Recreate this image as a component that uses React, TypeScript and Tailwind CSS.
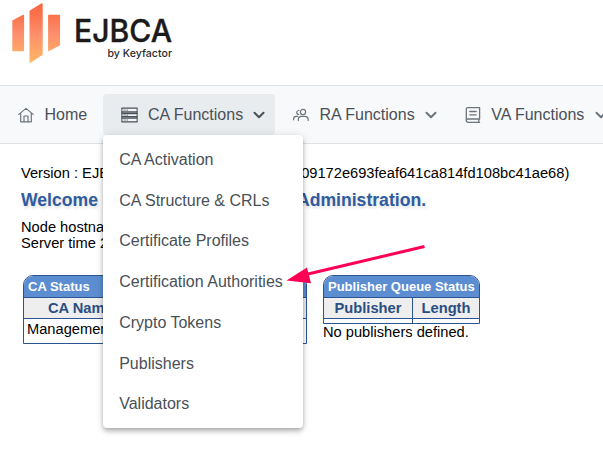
import React from "react";

const menuItems = [
  "CA Activation",
  "CA Structure & CRLs",
  "Certificate Profiles",
  "Certification Authorities",
  "Crypto Tokens",
  "Publishers",
  "Validators",
];

function Logo() {
  return (
    <div className="flex h-[85px] shrink-0">
      <svg className="ml-3 mt-[3px] h-[60px] w-[49px]" viewBox="0 0 49 60">
        <defs>
          <linearGradient id="flame" x1="0" y1="0" x2="0" y2="60" gradientUnits="userSpaceOnUse">
            <stop offset="0" stopColor="#f9663f" />
            <stop offset="0.25" stopColor="#fb7650" />
            <stop offset="0.5" stopColor="#fd8d6c" />
            <stop offset="1" stopColor="#ffb765" />
          </linearGradient>
        </defs>
        <g fill="url(#flame)" stroke="url(#flame)" strokeWidth="1.4" strokeLinejoin="round">
          <path d="M1 17.8 11.4 12.4v35.2H1Z" />
          <path d="M18.2 8.2 30 .9v50.6l-11.8 7.6Z" />
          <path d="M36.8 12.4h10.6v29.4l-10.6 5.6Z" />
        </g>
      </svg>
      <div className="ml-[14px] mt-[15px] flex w-[98px] flex-col items-end">
        <svg className="h-8 w-[98px] overflow-visible" viewBox="0 0 98 32">
          <text x="-1" y="26.5" textLength="98" lengthAdjust="spacingAndGlyphs" fill="#1b1b1b" stroke="#1b1b1b" strokeWidth=".4" className="font-['Inter',sans-serif] text-[31px] font-medium">EJBCA</text>
        </svg>
        <svg className="h-[14px] w-[65px] overflow-visible" viewBox="0 0 65 14">
          <text x="-0.5" y="10" textLength="64.5" lengthAdjust="spacingAndGlyphs" fill="#2b2b2b" className="font-['Inter',sans-serif] text-[10.6px] font-medium">by Keyfactor</text>
        </svg>
      </div>
    </div>
  );
}

function Chevron({ className }: { className: string }) {
  return (
    <svg className={`h-3 w-3 shrink-0 ${className}`} viewBox="0 0 12 12" fill="none" stroke="currentColor" strokeWidth="2" strokeLinecap="round" strokeLinejoin="round">
      <path d="m1.5 3.8 4.5 4.4 4.5-4.4" />
    </svg>
  );
}

function NavBar() {
  return (
    <nav className="flex h-[59px] shrink-0 items-start overflow-hidden border-y border-[#dee2e6] bg-[#f8f9fa] pt-2 text-[16px] leading-[41px] text-[#495057]">
      <div className="flex w-[103px] shrink-0 items-center pl-[18px]">
        <svg className="h-4 w-4" viewBox="0 0 16 16" fill="none" stroke="#6c757d" strokeWidth="1.2" strokeLinejoin="round" strokeLinecap="round">
          <path d="M.8 7.4 8 1.4l7.2 6M2.7 6.2v8.6h10.6V6.2M6 14.6V9h4v5.6" />
        </svg>
        <span className="ml-[10.5px]">Home</span>
      </div>
      <div className="flex w-[172px] shrink-0 items-center rounded-[4px] bg-[#e9ecef] pl-[18px]">
        <svg className="h-4 w-[17px]" viewBox="0 0 17 16" fill="none" stroke="#495057">
          <path fill="#f4f6f8" stroke="none" d="M1 1h15v14H1z" />
          <path strokeWidth="1" d="M.9 1v14M16.1 1v14" />
          <path strokeWidth="1.3" d="M.5 1.2h16M.5 5h16M.5 6.6h16M.5 9.6h16M.5 11.2h16M.5 14.8h16" />
          <path strokeWidth="1" d="M2.6 3.1h4.5M2.6 8.1h4.5M2.6 13h4.5" strokeDasharray="1 .8" />
        </svg>
        <span className="ml-[10px] whitespace-nowrap">CA Functions</span>
        <Chevron className="ml-[10px]" />
      </div>
      <div className="flex w-[172px] shrink-0 items-center pl-[18px]">
        <svg className="h-4 w-4" viewBox="0 0 16 16" fill="none" stroke="#6c757d" strokeWidth="1.2" strokeLinecap="round">
          <circle cx="10" cy="5" r="2.6" />
          <path d="M5.3 13.5v-1c0-2 1.5-3.1 3.2-3.1h3.2c2 0 3.5 1.2 3.5 3.1v1M5.8 3.5a2 2 0 1 0 0 4M.6 12.8v-.7c0-1.7 1.2-2.7 2.7-2.7h1.4" />
        </svg>
        <span className="ml-[10.5px] whitespace-nowrap">RA Functions</span>
        <Chevron className="ml-[10.5px] text-[#6c757d]" />
      </div>
      <div className="flex w-[172px] shrink-0 items-center pl-[18px]">
        <svg className="h-4 w-4" viewBox="0 0 16 16" fill="none" stroke="#6c757d" strokeWidth="1.3" strokeLinecap="round" strokeLinejoin="round">
          <path d="M14.6 12H3a1.6 1.6 0 0 0 0 3.3h11.6M1.3 13.5V2A1.4 1.4 0 0 1 2.7.7h11.9V12M13.8 12v3.3M4.8 4.5h6.4M4.8 7.8h6.4" />
        </svg>
        <span className="ml-[10.2px] whitespace-nowrap">VA Functions</span>
        <Chevron className="ml-[10.5px] text-[#6c757d]" />
      </div>
    </nav>
  );
}

function Dropdown() {
  return (
    <div className="absolute left-[103px] top-[135px] z-10 flex h-[293px] w-[200px] flex-col rounded-[4px] bg-white pt-[4.5px] text-[16px] text-[#495057] shadow-[0_2px_4px_-1px_rgba(0,0,0,0.2),0_4px_5px_0_rgba(0,0,0,0.14),0_1px_10px_0_rgba(0,0,0,0.12)]">
      {menuItems.map((item) => (
        <div key={item} className="flex h-[40.75px] shrink-0 items-center whitespace-nowrap pl-[16.2px]">{item}</div>
      ))}
    </div>
  );
}

function SplitLine({ left, right, className }: { left: string; right?: string; className: string }) {
  return (
    <div className={`flex whitespace-nowrap ${className}`}>
      <span className="w-[276px] shrink-0 overflow-x-clip">{left}</span>
      {right}
    </div>
  );
}

function StatusTables() {
  return (
    <div className="flex gap-4 pl-[2px] pt-[24px]">
      <section className="h-[69px] w-[284px] overflow-hidden rounded-t-[10px] border border-[#2a5492] text-black">
        <h2 className="h-[22px] border-b border-[#2a5492] bg-[#5c8dd0] pl-1 text-[13px] font-bold leading-[22px] text-white">CA Status</h2>
        <div className="h-[21px] border-b border-[#2a5492] bg-[#eee] pl-6 text-[14.7px] font-bold leading-[20px] text-[#2a4d84]">CA Name</div>
        <div className="pl-[3px] text-[14.67px] leading-[21px]">Management</div>
      </section>
      <div>
        <section className="h-[49px] w-[157px] overflow-hidden rounded-t-[10px] border border-[#2a5492]">
          <h2 className="h-[22px] whitespace-nowrap border-b border-[#2a5492] bg-[#5c8dd0] pl-1 text-[13px] font-bold leading-[22px] text-white">Publisher Queue Status</h2>
          <div className="flex h-[21px] border-b border-[#2a5492] bg-[#eee] text-center text-[14.7px] font-bold leading-[20px] text-[#2a4d84]">
            <span className="w-[89px] border-r border-[#2a5492]">Publisher</span>
            <span className="flex-1">Length</span>
          </div>
          <div className="h-1 w-[89px] border-r border-[#2a5492]" />
        </section>
        <p className="text-[14.67px] leading-[16px]">No publishers defined.</p>
      </div>
    </div>
  );
}

export default function App() {
  return (
    <div className="relative flex h-[461px] w-[603px] flex-col overflow-hidden bg-white font-['Liberation_Sans',Arial,sans-serif] text-black">
      <Logo />
      <NavBar />
      <main className="pl-[21px] pt-[21px]">
        <SplitLine className="text-[14.67px] leading-[16px]" left="Version : EJBCA" right={"\u2009\u200a09172e693feaf641ca814fd108bc41ae68)"} />
        <SplitLine className="mt-[9px] text-[17.6px] font-bold leading-[20px] text-[#2f5c9f] [text-shadow:1px_2px_3px_#ddd]" left="Welcome" right="Administration." />
        <SplitLine className="mt-[9px] text-[14.67px] leading-[16px]" left="Node hostname" />
        <SplitLine className="text-[14.67px] leading-[16px]" left="Server time 2" />
        <StatusTables />
      </main>
      <Dropdown />
      <svg className="absolute left-[280px] top-[240px] z-20 h-[50px] w-[150px]" viewBox="0 0 150 50">
        <path d="M144.5 6.5 28 34" stroke="#ff0055" strokeWidth="3" />
        <path d="m6.5 40.5 20.5-13 4 15.8Z" fill="#ff0055" />
      </svg>
    </div>
  );
}
